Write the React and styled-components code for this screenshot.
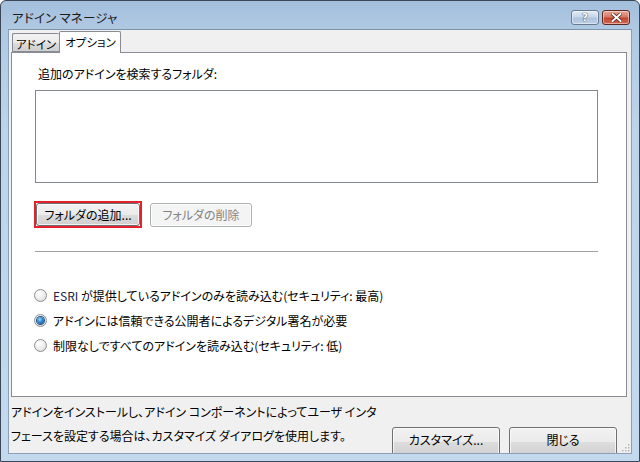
import React from "react";
import styled, { createGlobalStyle } from "styled-components";

const GlobalStyle = createGlobalStyle`
  html, body {
    margin: 0;
    padding: 0;
    background: #ffffff;
  }
  body {
    font-family: "Noto Sans CJK JP", "Liberation Sans", sans-serif;
    font-size: 12px;
    font-feature-settings: "palt";
  }
`;

const Window = styled.div`
  width: 640px;
  height: 462px;
  box-sizing: border-box;
  border: 1px solid #3b4756;
  border-radius: 6px 6px 0 0;
  background: linear-gradient(180deg, #a3bfdc 0px, #b0c9e3 28px, #bcd3ea 120px, #c4d9ee 462px);
  padding: 0 7px 7px 7px;
  display: flex;
  flex-direction: column;
  overflow: hidden;
`;

const TitleBar = styled.div`
  height: 28px;
  display: flex;
  align-items: center;
  padding-left: 4px;
`;

const Title = styled.div`
  flex: 1;
  font-size: 12.5px;
  color: #1b1b1b;
  padding-top: 4px;
  letter-spacing: 0.2px;
`;

const CaptionButtons = styled.div`
  display: flex;
  gap: 3px;
  align-self: flex-start;
  margin-top: 9px;
  margin-right: 2px;
`;

const CaptionButton = styled.div`
  width: 28px;
  height: 15px;
  box-sizing: border-box;
  border: 1px solid ${(p) => (p.$close ? "#5b2a22" : "#677a90")};
  border-radius: 3px;
  display: flex;
  align-items: center;
  justify-content: center;
  background: ${(p) =>
    p.$close
      ? "linear-gradient(180deg, #e9a897 0%, #d77a66 45%, #c3452f 55%, #cf6a52 100%)"
      : "linear-gradient(180deg, #e3ecf6 0%, #c6d6e9 45%, #aec4de 55%, #bcd0e6 100%)"};
  box-shadow: inset 0 0 0 1px rgba(255, 255, 255, 0.45);
  color: #ffffff;
  font-family: "DejaVu Sans", sans-serif;
  font-weight: bold;
  font-size: 11px;
  line-height: 1;
  text-shadow: 0 0 1px #2d3a4a, 0 0 1px #2d3a4a;
`;

const Client = styled.div`
  flex: 1;
  background: #f0f0f0;
  border: 1px solid #8aa0b7;
  border-top-color: #7d93ab;
  display: flex;
  flex-direction: column;
  padding: 0 4px 0 1px;
  overflow: hidden;
  position: relative;
`;

const TabStrip = styled.div`
  display: flex;
  align-items: flex-end;
  height: 22px;
  padding-left: 2px;
  position: relative;
  z-index: 1;
`;

const Tab = styled.div`
  box-sizing: border-box;
  height: ${(p) => (p.$active ? "22px" : "19px")};
  padding: ${(p) => (p.$active ? "2px 4px 0 5px" : "2px 3px 0 3px")};
  margin-bottom: ${(p) => (p.$active ? "-1px" : "0")};
  border: 1px solid #898c95;
  border-bottom: ${(p) => (p.$active ? "none" : "1px solid #898c95")};
  border-right: ${(p) => (p.$active ? "1px solid #898c95" : "none")};
  border-radius: 2px 2px 0 0;
  background: ${(p) =>
    p.$active ? "#ffffff" : "linear-gradient(180deg, #f2f2f2 0%, #ebebeb 50%, #dddddd 51%, #cfcfcf 100%)"};
  color: #000;
  font-size: 11.5px;
  line-height: 16px;
  white-space: nowrap;
`;

const Panel = styled.div`
  box-sizing: border-box;
  height: 345px;
  margin-left: 1px;
  background: #ffffff;
  border: 1px solid #898c95;
  padding: 13px 28px 0 23px;
  display: flex;
  flex-direction: column;
`;

const Label = styled.div`
  margin-left: 3px;
  line-height: 16px;
  color: #000;
`;

const ListBox = styled.div`
  margin-top: 8px;
  height: 93px;
  box-sizing: border-box;
  border: 1px solid #828790;
  background: #ffffff;
`;

const ButtonRow = styled.div`
  display: flex;
  align-items: center;
  gap: 8px;
  margin-top: 18px;
  margin-left: -1px;
`;

const Focus = styled.div`
  border: 2px solid #e3202b;
  display: flex;
`;

const Button = styled.div`
  box-sizing: border-box;
  width: ${(p) => p.$w}px;
  height: ${(p) => p.$h || 23}px;
  border: 1px solid ${(p) => (p.$disabled ? "#adb2b5" : "#707070")};
  border-radius: 3px;
  background: ${(p) =>
    p.$disabled
      ? "#f4f4f4"
      : "linear-gradient(180deg, #f2f2f2 0%, #ebebeb 50%, #dddddd 51%, #cfcfcf 100%)"};
  box-shadow: inset 0 0 0 1px rgba(255, 255, 255, 0.7);
  color: ${(p) => (p.$disabled ? "#838383" : "#000")};
  display: flex;
  align-items: ${(p) => (p.$top ? "flex-start" : "center")};
  padding-top: ${(p) => (p.$top ? "3px" : "0")};
  justify-content: center;
  white-space: nowrap;
  font-size: 12px;
`;

const Separator = styled.div`
  margin-top: 23px;
  height: 1px;
  background: #a0a0a0;
  border-bottom: 1px solid #ffffff;
`;

const RadioGroup = styled.div`
  margin-top: 34px;
  display: flex;
  flex-direction: column;
  gap: 9px;
`;

const RadioRow = styled.div`
  display: flex;
  align-items: center;
  height: 16px;
  gap: 6px;
  margin-left: -1px;
  white-space: nowrap;
`;

const RadioCircle = styled.div`
  width: 13px;
  height: 13px;
  box-sizing: border-box;
  border-radius: 50%;
  border: 1px solid #8e8f8f;
  background: radial-gradient(circle at 35% 30%, #ffffff 0%, #ececec 55%, #d4d4d4 100%);
  display: flex;
  align-items: center;
  justify-content: center;
  flex-shrink: 0;
`;

const RadioDot = styled.div`
  width: 7px;
  height: 7px;
  border-radius: 50%;
  background: radial-gradient(circle at 40% 35%, #9fd5f7 0%, #2d86cf 45%, #0f3f74 100%);
  box-shadow: 0 0 0 1px #1f4f80;
`;

const Esri = styled.span`
  color: #1a1d4a;
`;

const Footer = styled.div`
  flex: 1;
  display: flex;
  justify-content: space-between;
  padding: 3px 10px 0 1px;
  overflow: hidden;
`;

const Note = styled.div`
  line-height: 24px;
  color: #000;
  white-space: nowrap;
`;

const FooterButtons = styled.div`
  display: flex;
  gap: 9px;
  margin-top: 27px;
  align-items: flex-start;
`;

const Grip = styled.svg`
  position: absolute;
  right: 1px;
  bottom: 1px;
`;

function Radio({ checked, children }) {
  return (
    <RadioRow>
      <RadioCircle>{checked && <RadioDot />}</RadioCircle>
      <span>{children}</span>
    </RadioRow>
  );
}

export default function App() {
  return (
    <>
      <GlobalStyle />
      <Window>
        <TitleBar>
          <Title>アドイン マネージャ</Title>
          <CaptionButtons>
            <CaptionButton>?</CaptionButton>
            <CaptionButton $close>
              <svg width="11" height="9" viewBox="0 0 11 9">
                <path
                  d="M1.5 1 L9.5 8 M9.5 1 L1.5 8"
                  stroke="#4a1c14"
                  strokeWidth="3.4"
                  strokeLinecap="square"
                />
                <path
                  d="M1.5 1 L9.5 8 M9.5 1 L1.5 8"
                  stroke="#ffffff"
                  strokeWidth="2"
                  strokeLinecap="square"
                />
              </svg>
            </CaptionButton>
          </CaptionButtons>
        </TitleBar>
        <Client>
          <TabStrip>
            <Tab>アドイン</Tab>
            <Tab $active>オプション</Tab>
          </TabStrip>
          <Panel>
            <Label>追加のアドインを検索するフォルダ:</Label>
            <ListBox />
            <ButtonRow>
              <Focus>
                <Button $w={104}>フォルダの追加...</Button>
              </Focus>
              <Button $w={102} $h={24} $disabled>
                フォルダの削除
              </Button>
            </ButtonRow>
            <Separator />
            <RadioGroup>
              <Radio>
                <Esri>ESRI</Esri> が提供しているアドインのみを読み込む(セキュリティ: 最高)
              </Radio>
              <Radio checked>アドインには信頼できる公開者によるデジタル署名が必要</Radio>
              <Radio>制限なしですべてのアドインを読み込む(セキュリティ: 低)</Radio>
            </RadioGroup>
          </Panel>
          <Footer>
            <Note>
              アドインをインストールし、アドイン コンポーネントによってユーザ インタ
              <br />
              フェースを設定する場合は、カスタマイズ ダイアログを使用します。
            </Note>
            <FooterButtons>
              <Button $w={108} $h={30} $top>
                カスタマイズ...
              </Button>
              <Button $w={108} $h={30} $top>
                閉じる
              </Button>
            </FooterButtons>
          </Footer>
          <Grip width="10" height="10" viewBox="0 0 10 10">
            {[
              [8, 2],
              [8, 5],
              [5, 5],
              [8, 8],
              [5, 8],
              [2, 8],
            ].map(([x, y]) => (
              <rect key={`${x}-${y}`} x={x} y={y} width="1.5" height="1.5" fill="#b5b5b5" />
            ))}
          </Grip>
        </Client>
      </Window>
    </>
  );
}
